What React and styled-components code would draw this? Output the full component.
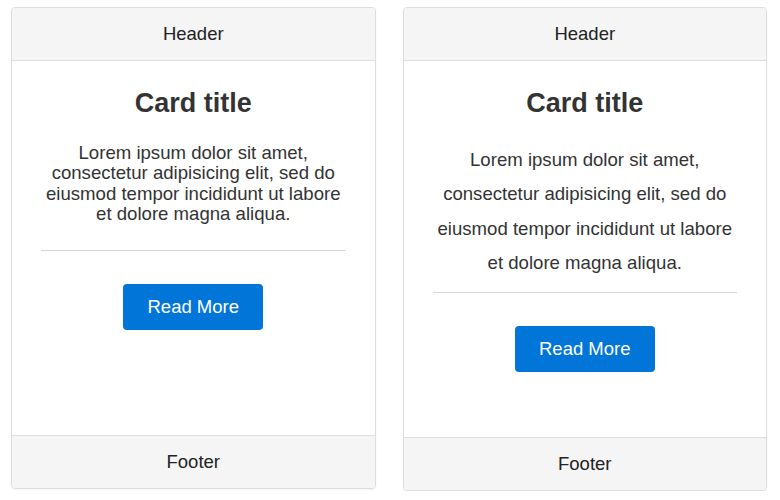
import React from "react"
import styled, { createGlobalStyle } from "styled-components"

const GlobalStyle = createGlobalStyle`
  body {
    margin: 0;
    background: #fff;
    font-family: "Liberation Sans", Arial, sans-serif;
    color: #333;
  }
`

const StyledPage = styled.div`
  display: grid;
  grid-template-columns: 1fr 1fr;
  column-gap: 27px;
  align-items: start;
  padding: 7px 13px 0 11px;
`

const StyledCard = styled.section`
  display: flex;
  flex-direction: column;
  height: ${({ $height }) => $height}px;
  box-sizing: border-box;
  border: 1px solid #ddd;
  border-radius: 4px;
  box-shadow: 0 1px 2px rgba(0, 0, 0, 0.05);
  overflow: hidden;
  text-align: center;
`

const StyledBar = styled.div`
  display: flex;
  align-items: center;
  justify-content: center;
  height: 52px;
  flex-shrink: 0;
  background: #f5f5f5;
  font-size: 18.5px;
  color: #222;
  border-${({ $side }) => $side}: 1px solid #ddd;
`

const StyledBody = styled.div`
  flex: 1;
  padding: 27px 29px 0;
`

const StyledTitle = styled.h2`
  margin: 0 0 24px;
  font-size: 27px;
  font-weight: bold;
  line-height: 31px;
  color: #333;
`

const StyledText = styled.p`
  margin: 0 0 ${({ $spaced }) => ($spaced ? "12px" : "26px")};
  font-size: 18.6px;
  line-height: ${({ $spaced }) => ($spaced ? "34.3px" : "20.3px")};
  color: #333;
`

const StyledRule = styled.hr`
  margin: 0 0 33px;
  border: 0;
  border-top: 1px solid #d6d6d6;
`

const StyledButton = styled.button`
  width: 140px;
  height: 46px;
  border: 0;
  border-radius: 4px;
  background: #0275d8;
  color: #fff;
  font-family: "Liberation Sans", Arial, sans-serif;
  font-size: 18.5px;
  cursor: pointer;
`

const text =
  "Lorem ipsum dolor sit amet, consectetur adipisicing elit, sed do eiusmod tempor incididunt ut labore et dolore magna aliqua."

const Card = ({ height, spaced }) => (
  <StyledCard $height={height}>
    <StyledBar $side="bottom">Header</StyledBar>
    <StyledBody>
      <StyledTitle>Card title</StyledTitle>
      <StyledText $spaced={spaced}>{text}</StyledText>
      <StyledRule />
      <StyledButton>Read More</StyledButton>
    </StyledBody>
    <StyledBar $side="top">Footer</StyledBar>
  </StyledCard>
)

const App = () => (
  <>
    <GlobalStyle />
    <StyledPage>
      <Card height={482} />
      <Card height={484} spaced />
    </StyledPage>
  </>
)

export default App
